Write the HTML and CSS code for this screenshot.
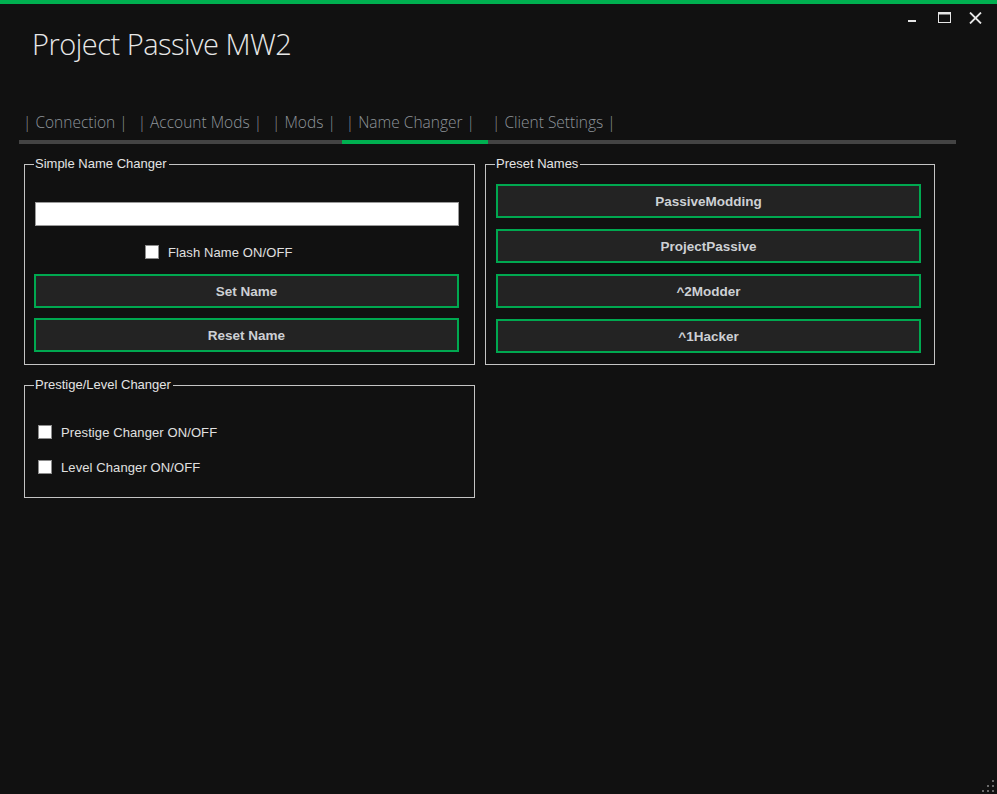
FILE: index.html
```html
<!DOCTYPE html>
<html lang="en">
<head>
    <meta charset="UTF-8">
    <title>Project Passive MW2</title>
    <link rel="stylesheet" href="styles.css">
</head>
<body>
    <div class="window">
        <div class="accent"></div>

        <header class="titlebar">
            <h1 class="title">Project Passive MW2</h1>
            <div class="controls">
                <svg class="ctrl" width="13" height="12" viewBox="0 0 13 12">
                    <rect x="1" y="8" width="8" height="2" fill="#e6e6e6"/>
                </svg>
                <svg class="ctrl" width="13" height="12" viewBox="0 0 13 12">
                    <rect x="0.5" y="0.5" width="12" height="10" fill="none" stroke="#e6e6e6"/>
                    <rect x="0" y="0" width="13" height="2.5" fill="#e6e6e6"/>
                </svg>
                <svg class="ctrl" width="13" height="12" viewBox="0 0 13 12">
                    <path d="M1 0.5 L12 11.5 M12 0.5 L1 11.5" stroke="#e6e6e6" stroke-width="1.8"/>
                </svg>
            </div>
        </header>

        <nav class="tabs">
            <div class="tab">| Connection |</div>
            <div class="tab">| Account Mods |</div>
            <div class="tab">| Mods |</div>
            <div class="tab active">| Name Changer |</div>
            <div class="tab">| Client Settings |</div>
        </nav>

        <main class="content">
            <fieldset class="group group-name">
                <legend>Simple Name Changer</legend>
                <input class="name-input" type="text">
                <label class="check-row flash">
                    <input type="checkbox" class="check">
                    <span>Flash Name ON/OFF</span>
                </label>
                <div class="btn-stack">
                    <button class="btn">Set Name</button>
                    <button class="btn">Reset Name</button>
                </div>
            </fieldset>

            <fieldset class="group group-preset">
                <legend>Preset Names</legend>
                <div class="btn-stack preset-stack">
                    <button class="btn">PassiveModding</button>
                    <button class="btn">ProjectPassive</button>
                    <button class="btn">^2Modder</button>
                    <button class="btn">^1Hacker</button>
                </div>
            </fieldset>

            <fieldset class="group group-prestige">
                <legend>Prestige/Level Changer</legend>
                <label class="check-row">
                    <input type="checkbox" class="check">
                    <span>Prestige Changer ON/OFF</span>
                </label>
                <label class="check-row">
                    <input type="checkbox" class="check">
                    <span>Level Changer ON/OFF</span>
                </label>
            </fieldset>
        </main>

        <svg class="grip" width="16" height="16" viewBox="0 0 16 16">
            <g fill="#6a6a6a">
                <rect x="12" y="2" width="2" height="2"/>
                <rect x="7" y="7" width="2" height="2"/>
                <rect x="12" y="7" width="2" height="2"/>
                <rect x="2" y="12" width="2" height="2"/>
                <rect x="7" y="12" width="2" height="2"/>
                <rect x="12" y="12" width="2" height="2"/>
            </g>
        </svg>
    </div>
</body>
</html>
```

FILE: styles.css
```css
html, body {
    margin: 0;
    padding: 0;
    background: #111111;
}

body {
    font-family: "Liberation Sans", Arial, sans-serif;
    color: #dcdcdc;
}

.window {
    position: relative;
    width: 997px;
    height: 794px;
    overflow: hidden;
}

.accent {
    height: 4px;
    background: #00b050;
}

.titlebar {
    display: flex;
    justify-content: space-between;
    align-items: flex-start;
    height: 90px;
}

.title {
    margin: 20px 0 0 32px;
    font-family: "Open Sans", sans-serif;
    font-weight: 300;
    font-size: 29px;
    letter-spacing: -0.5px;
    line-height: 40px;
    color: #e8e8e8;
}

.controls {
    display: flex;
    gap: 18px;
    margin: 8px 15px 0 0;
}

.ctrl {
    display: block;
}

.tabs {
    display: flex;
    margin-left: 19px;
    width: 937px;
    border-bottom: 4px solid #444444;
    height: 50px;
    box-sizing: border-box;
}

.tab {
    padding: 17px 6px 0 4px;
    font-family: "Open Sans", sans-serif;
    font-weight: 300;
    font-size: 15.5px;
    color: #8e949a;
    white-space: nowrap;
}

.tab.active {
    border-bottom: 4px solid #00b050;
    margin-bottom: -4px;
    padding-right: 13px;
}

.content {
    display: grid;
    grid-template-columns: 451px 450px;
    column-gap: 10px;
    row-gap: 12px;
    padding: 12px 0 0 24px;
    align-items: start;
}

.group {
    margin: 0;
    border: 1px solid #c4c4c4;
    box-sizing: border-box;
    min-width: 0;
}

.group legend {
    margin-left: -1px;
    padding: 0 2px 0 1px;
    font-size: 13px;
    color: #e4e4e4;
    line-height: 16px;
}

.group-name {
    height: 209px;
    padding: 0 15px 0 10px;
}

.group-preset {
    height: 209px;
    padding: 0 13px 0 10px;
}

.group-prestige {
    grid-column: 1;
    width: 451px;
    height: 121px;
    padding: 0 10px 0 10px;
}

.name-input {
    display: block;
    width: 100%;
    height: 24px;
    box-sizing: border-box;
    margin-top: 30px;
    border: 1px solid #9a9a9a;
    background: #ffffff;
}

.check-row {
    display: flex;
    align-items: center;
    gap: 9px;
    font-size: 13px;
    letter-spacing: 0.1px;
    color: #e0e0e0;
    height: 14px;
}

.check-row.flash {
    margin: 19px 0 15px 110px;
}

.group-prestige .check-row {
    margin: 32px 0 0 3px;
}

.group-prestige .check-row + .check-row {
    margin-top: 21px;
}

.check {
    appearance: none;
    -webkit-appearance: none;
    margin: 0;
    width: 14px;
    height: 14px;
    background: #ffffff;
    border: 1px solid #8c8c8c;
    box-sizing: border-box;
}

.btn-stack {
    display: flex;
    flex-direction: column;
    gap: 10px;
}

.group-name .btn {
    margin-left: -1px;
}

.preset-stack {
    margin-top: 12px;
    gap: 11px;
}

.btn {
    height: 34px;
    background: #232323;
    border: 2px solid #00a850;
    color: #cdd0d4;
    font-family: "Liberation Sans", Arial, sans-serif;
    font-weight: bold;
    font-size: 13.5px;
    cursor: pointer;
}

.grip {
    position: absolute;
    right: 1px;
    bottom: 0;
}
```
